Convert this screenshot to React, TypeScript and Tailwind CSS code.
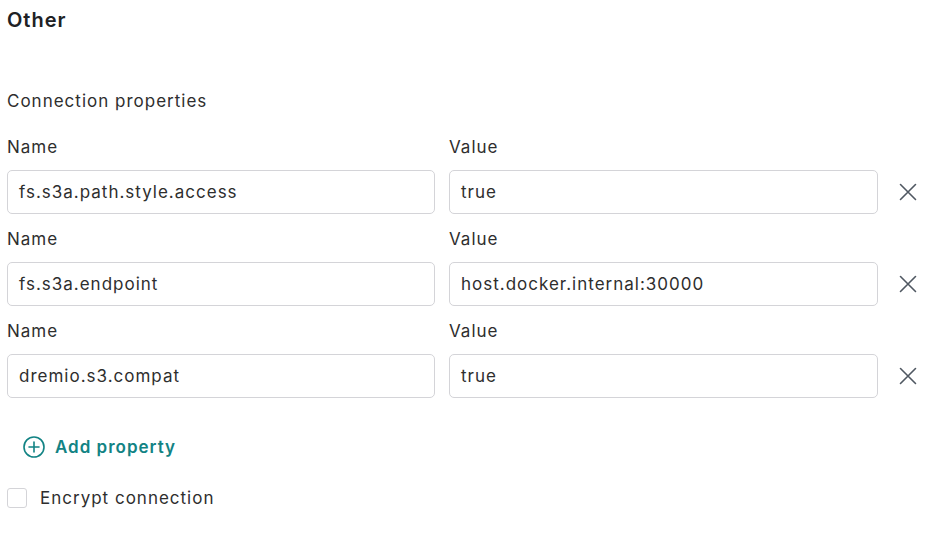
import React from 'react';

const rows = [
  { name: 'fs.s3a.path.style.access', value: 'true' },
  { name: 'fs.s3a.endpoint', value: 'host.docker.internal:30000' },
  { name: 'dremio.s3.compat', value: 'true' },
];

function CloseIcon() {
  return (
    <svg width="20" height="20" viewBox="0 0 20 20" fill="none" stroke="#505862" strokeWidth="1.6" strokeLinecap="round">
      <path d="M2.5 2.5l15 15M17.5 2.5l-15 15" />
    </svg>
  );
}

function PlusCircle() {
  return (
    <svg width="22" height="22" viewBox="0 0 22 22" fill="none" stroke="#128384" strokeWidth="1.6" strokeLinecap="round">
      <circle cx="11" cy="11" r="10" />
      <path d="M11 6v10M6 11h10" />
    </svg>
  );
}

function PropertyRow({ name, value }: { name: string; value: string }) {
  return (
    <div className="flex flex-col mb-[13px]">
      <div className="flex gap-[14px] h-6 items-center mb-[11px]">
        <div className="w-[428px] leading-6">Name</div>
        <div className="w-[429px] leading-6">Value</div>
      </div>
      <div className="flex items-center gap-[14px]">
        <div className="w-[428px] h-[44px] border border-[#d4d4d8] rounded-[5px] flex items-center px-[11px] pt-[2px] bg-white">
          {name}
        </div>
        <div className="w-[429px] h-[44px] border border-[#d4d4d8] rounded-[5px] flex items-center px-[11px] pt-[2px] bg-white">
          {value}
        </div>
        <button className="ml-[6px] w-5 h-5 flex items-center justify-center">
          <CloseIcon />
        </button>
      </div>
    </div>
  );
}

export default function App() {
  return (
    <div
      className="w-[933px] h-[538px] flex flex-col bg-white text-[#2e2e2e] text-[17px] tracking-[1px] pl-[7px] pt-[8px]"
      style={{ fontFamily: 'Inter, "Noto Sans", sans-serif' }}
    >
      <h2 className="text-[20px] font-semibold leading-6 text-[#202124]">Other</h2>
      <div className="mt-[57px] leading-6 mb-[22px]">Connection properties</div>
      {rows.map((r) => (
        <PropertyRow key={r.name} name={r.name} value={r.value} />
      ))}
      <button className="flex items-center gap-[10px] ml-[16px] mt-[24px] text-[#128384] font-semibold text-[17px] leading-6">
        <PlusCircle />
        <span>Add property</span>
      </button>
      <label className="flex items-center gap-[13px] mt-[27px]">
        <span className="w-5 h-5 border border-[#d4d4d8] rounded-[3px] bg-white" />
        <span className="leading-6">Encrypt connection</span>
      </label>
    </div>
  );
}
